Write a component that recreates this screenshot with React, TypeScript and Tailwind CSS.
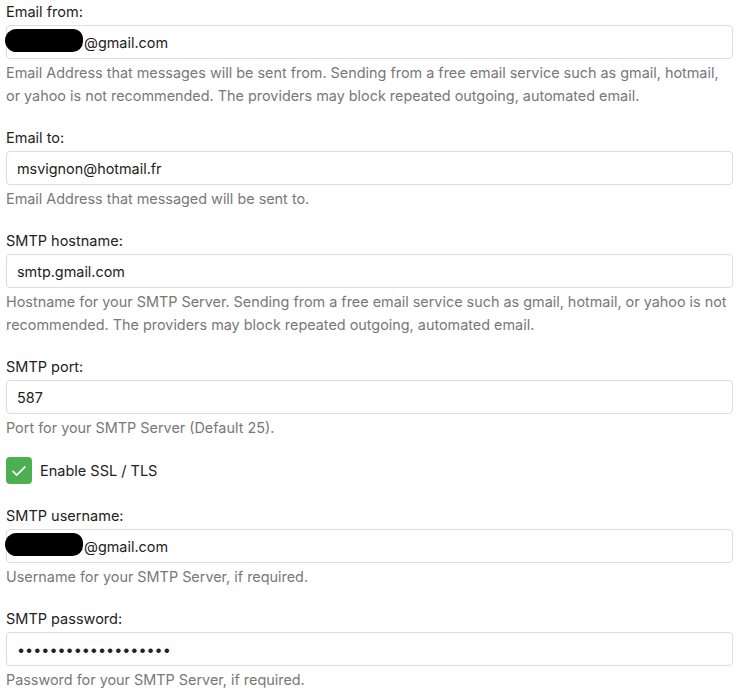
import React, { useState } from 'react';

type FieldProps = {
  label: string;
  value: string;
  help: string;
  type?: string;
  redacted?: boolean;
};

const Field: React.FC<FieldProps> = ({ label, value, help, type = 'text', redacted }) => (
  <div className="mb-[21px]">
    <label className="block text-[14.5px] leading-5 text-[#222] mb-[3px]">{label}</label>
    <div className="relative">
      {redacted && (
        <span className="absolute left-[-1px] top-[4px] h-[23px] w-[78px] rounded-[12px_10px_11px_12px] bg-black pointer-events-none" />
      )}
      <input
        type={type}
        defaultValue={value}
        className={`block w-full h-[34px] border border-[#dcdcdc] rounded-[4px] bg-white text-[14.4px] text-[#222] outline-none ${
          redacted ? 'pl-[77px]' : 'pl-[10px]'
        } pr-3`}
      />
    </div>
    <p className="mt-[2px] text-[14.4px] leading-[23px] text-[#787878]">{help}</p>
  </div>
);

export default function App() {
  const [ssl, setSsl] = useState(true);

  return (
    <div className="min-h-screen bg-white pl-[6px] pr-[23px] pt-[2px]" style={{ fontFamily: 'Inter, "Noto Sans", sans-serif' }}>
      <Field
        label="Email from:"
        value="@gmail.com"
        redacted
        help="Email Address that messages will be sent from. Sending from a free email service such as gmail, hotmail, or yahoo is not recommended. The providers may block repeated outgoing, automated email."
      />
      <Field label="Email to:" value="msvignon@hotmail.fr" help="Email Address that messaged will be sent to." />
      <Field
        label="SMTP hostname:"
        value="smtp.gmail.com"
        help="Hostname for your SMTP Server. Sending from a free email service such as gmail, hotmail, or yahoo is not recommended. The providers may block repeated outgoing, automated email."
      />
      <Field label="SMTP port:" value="587" help="Port for your SMTP Server (Default 25)." />

      {/* SSL toggle */}
      <label className="flex items-center gap-2 -mt-[3px] mb-[22px] cursor-pointer select-none">
        <button
          type="button"
          onClick={() => setSsl(!ssl)}
          className={`flex items-center justify-center w-[26px] h-[27px] rounded-[4px] ${ssl ? 'bg-[#4caf50]' : 'bg-white border border-[#ccc]'}`}
        >
          {ssl && (
            <svg width="18" height="18" viewBox="0 0 24 24" fill="none" stroke="white" strokeWidth="2.2" strokeLinecap="round" strokeLinejoin="round">
              <path d="M4 12.5l5 5L20 6.5" />
            </svg>
          )}
        </button>
        <span className="text-[14.5px] text-[#222]">Enable SSL / TLS</span>
      </label>

      <Field label="SMTP username:" value="@gmail.com" redacted help="Username for your SMTP Server, if required." />
      <Field label="SMTP password:" value="abcdefghijklmnopqrs" type="password" help="Password for your SMTP Server, if required." />
    </div>
  );
}
